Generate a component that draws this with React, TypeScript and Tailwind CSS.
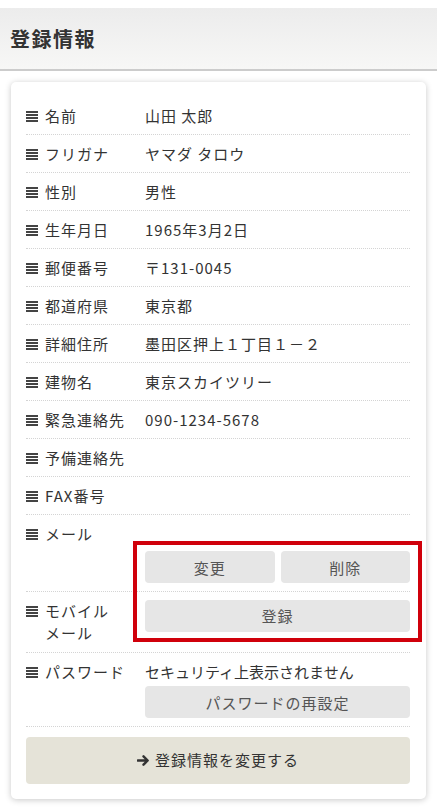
import React from "react";

const Icon = () => (
  <svg width="12" height="12" viewBox="0 0 12 12" className="shrink-0 mr-[7px]" aria-hidden>
    <rect x="0" y="1" width="12" height="2" fill="#444" />
    <rect x="0" y="4" width="12" height="2" fill="#444" />
    <rect x="0" y="7" width="12" height="2" fill="#444" />
    <rect x="0" y="10" width="12" height="2" fill="#444" />
  </svg>
);

const Label = ({ children, lh = "leading-[21px]" }: { children: React.ReactNode; lh?: string }) => (
  <div className="w-[119px] shrink-0 flex items-start">
    <div className="h-[21px] flex items-center">
      <Icon />
    </div>
    <div className={lh}>{children}</div>
  </div>
);

const Row = ({ label, children }: { label: React.ReactNode; children?: React.ReactNode }) => (
  <div className="flex py-2 border-b border-dotted border-[#d4d4d4]">
    <Label>{label}</Label>
    <div className="flex-1 leading-[21px] min-h-[21px]">{children}</div>
  </div>
);

const Btn = ({ children, className = "" }: { children: React.ReactNode; className?: string }) => (
  <div
    className={
      "h-[32px] flex items-center justify-center rounded-[4px] bg-[#e6e6e6] text-[#555] text-[15px] " + className
    }
  >
    {children}
  </div>
);

export default function App() {
  const font = { fontFamily: '"Noto Sans CJK JP", "Noto Sans", sans-serif' };
  return (
    <div className="w-[437px] min-h-[811px] bg-white text-[#333] text-[15px] tracking-[1px]" style={font}>
      <div className="h-[8px] bg-white" />
      <div className="h-[63px] bg-gradient-to-b from-[#ececec] to-[#f7f7f6] border-b-2 border-[#cccccc] flex items-center pl-[10px]">
        <h1 className="text-[20px] font-bold text-[#333] tracking-[1.5px]">登録情報</h1>
      </div>
      <div className="px-[11px] pt-[11px] pb-[13px]">
        <div className="relative bg-white rounded-[5px] shadow-[0_1px_6px_rgba(0,0,0,0.22)] pt-[15px] pb-[15px] pl-[15px] pr-[16px]">
          <Row label="名前">山田 太郎</Row>
          <Row label="フリガナ">ヤマダ タロウ</Row>
          <Row label="性別">男性</Row>
          <Row label="生年月日">1965年3月2日</Row>
          <Row label="郵便番号">〒131-0045</Row>
          <Row label="都道府県">東京都</Row>
          <Row label="詳細住所">墨田区押上１丁目１－２</Row>
          <Row label="建物名">東京スカイツリー</Row>
          <Row label="緊急連絡先">090-1234-5678</Row>
          <Row label="予備連絡先" />
          <Row label="FAX番号" />
          <Row label="メール">
            <div className="flex gap-[6px] mt-[28px]">
              <Btn className="flex-1">変更</Btn>
              <Btn className="flex-1">削除</Btn>
            </div>
          </Row>
          <div className="flex py-2 border-b border-dotted border-[#d4d4d4]">
            <Label lh="leading-[22px]">
              モバイル
              <br />
              メール
            </Label>
            <div className="flex-1">
              <Btn>登録</Btn>
            </div>
          </div>
          <Row label="パスワード">
            <div className="tracking-normal">セキュリティ上表示されません</div>
            <Btn className="mt-[4px]">パスワードの再設定</Btn>
          </Row>
          <div className="mt-[10px] h-[47px] rounded-[4px] bg-[#e5e3d8] flex items-center justify-center text-[15px] text-[#333]">
            <svg width="13" height="13" viewBox="0 0 14 14" className="mr-[5px]" aria-hidden>
              <path d="M1 7h10M7 2.5L11.5 7 7 11.5" stroke="#333" strokeWidth="2.6" fill="none" strokeLinecap="round" strokeLinejoin="round" />
            </svg>
            登録情報を変更する
          </div>
          <div className="absolute left-[122px] top-[459px] w-[289px] h-[101px] border-[4px] border-[#d0000b] pointer-events-none" />
        </div>
      </div>
    </div>
  );
}
